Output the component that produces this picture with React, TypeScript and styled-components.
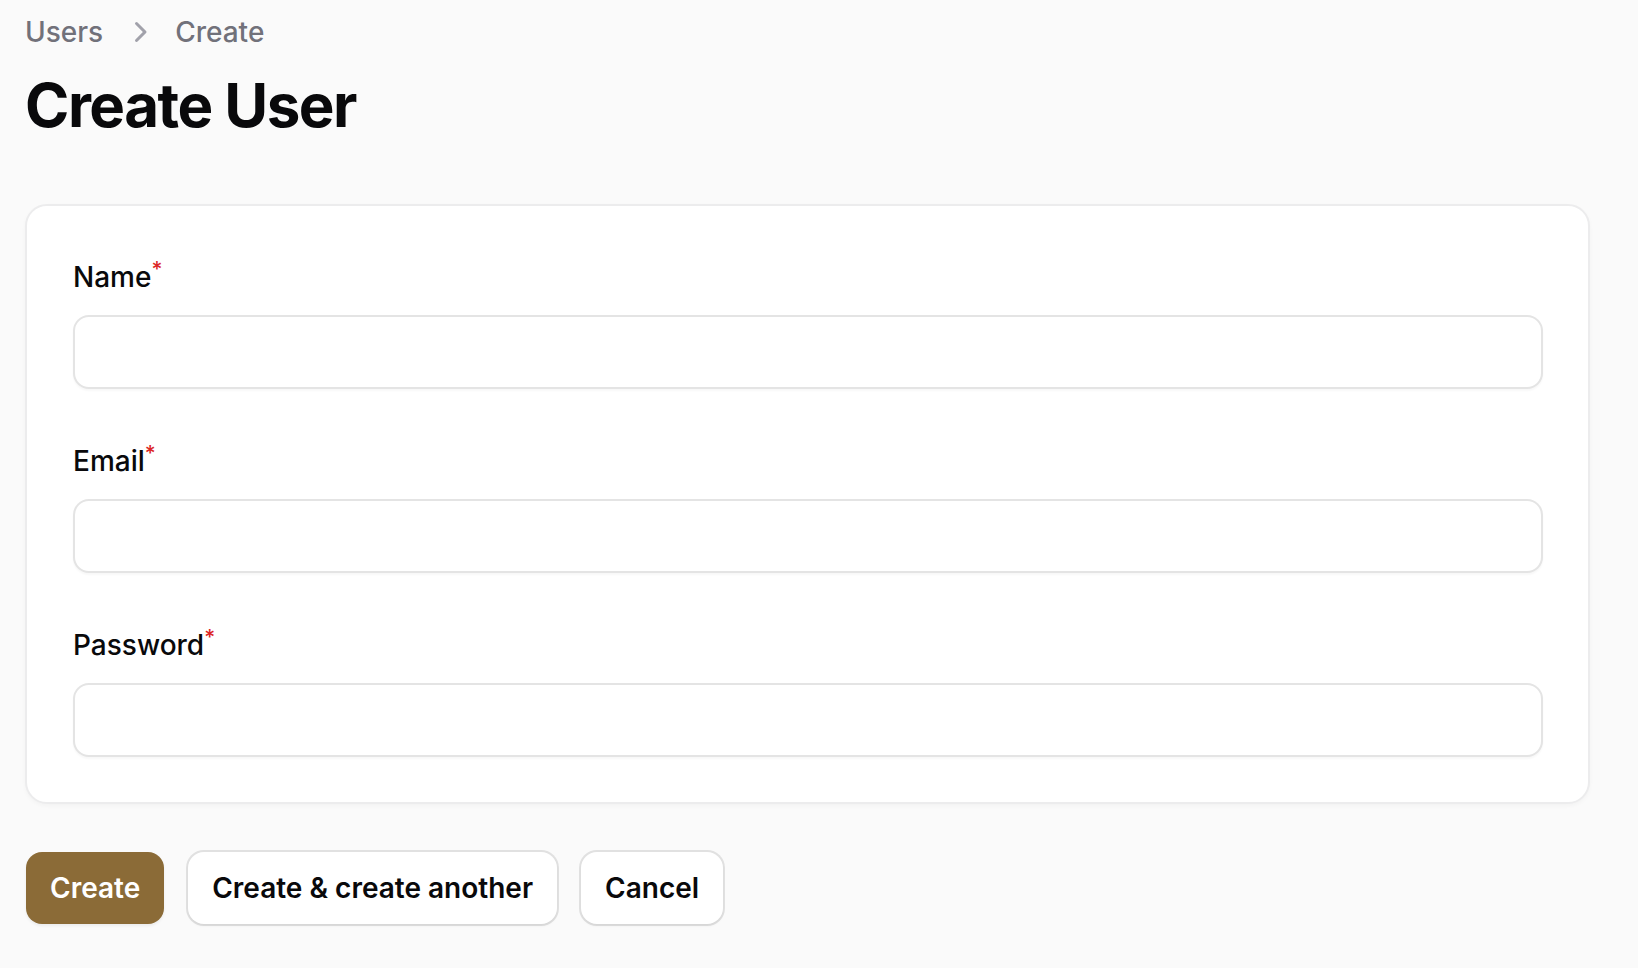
import React from "react";
import styled, { createGlobalStyle } from "styled-components";

const GlobalStyle = createGlobalStyle`
  *, *::before, *::after { box-sizing: border-box; }
  html, body { margin: 0; padding: 0; }
  body {
    background: #fafafa;
    font-family: Inter, "Noto Sans", "Liberation Sans", sans-serif;
    color: #09090b;
    -webkit-font-smoothing: antialiased;
  }
`;

const Page = styled.main`
  display: flex;
  flex-direction: column;
  padding: 12px 48px 40px 25px;
`;

const Header = styled.header`
  display: flex;
  flex-direction: column;
  gap: 17px;
`;

const Breadcrumbs = styled.nav`
  display: flex;
  align-items: center;
  gap: 16px;
  height: 40px;
`;

const Crumb = styled.a`
  font-size: 28px;
  line-height: 40px;
  font-weight: 500;
  color: #71717a;
  text-decoration: none;
`;

const Chevron = styled.svg`
  width: 40px;
  height: 40px;
  color: #a1a1aa;
  flex: none;
`;

const Title = styled.h1`
  margin: 0;
  font-size: 60px;
  line-height: 72px;
  font-weight: 700;
  letter-spacing: -0.025em;
  color: #09090b;
`;

const Card = styled.section`
  margin-top: 63px;
  background: #ffffff;
  border: 2px solid #ececed;
  border-radius: 22px;
  box-shadow: 0 2px 4px rgba(0, 0, 0, 0.03);
  padding: 46px 45px 45px 46px;
  display: flex;
  flex-direction: column;
  gap: 47px;
`;

const Field = styled.div`
  display: flex;
  flex-direction: column;
  gap: 18px;
`;

const Label = styled.label`
  display: block;
  padding-top: 5px;
  font-size: 28px;
  line-height: 40px;
  font-weight: 450;
  color: #09090b;
`;

const Required = styled.sup`
  color: #dc2626;
  font-weight: 500;
  font-size: 21px;
  line-height: 0;
`;

const Input = styled.input`
  display: block;
  width: 100%;
  height: 74px;
  border: 2px solid rgba(9, 9, 11, 0.11);
  border-radius: 16px;
  background: #ffffff;
  box-shadow: 0 2px 2px rgba(0, 0, 0, 0.03);
  padding: 0 24px;
  font: inherit;
  font-size: 28px;
  color: #09090b;
  outline: none;
`;

const Actions = styled.div`
  margin-top: 48px;
  display: flex;
  gap: 24px;
  padding-left: 1px;
`;

const Button = styled.button<{ $primary?: boolean }>`
  height: 72px;
  padding: 0 24px;
  border-radius: 16px;
  font-family: inherit;
  font-size: 28px;
  font-weight: 600;
  cursor: pointer;
  border: none;
  background: ${(p) => (p.$primary ? "#8b6b37" : "#ffffff")};
  color: ${(p) => (p.$primary ? "#ffffff" : "#09090b")};
  box-shadow: ${(p) =>
    p.$primary
      ? "0 2px 3px rgba(0, 0, 0, 0.06)"
      : "0 0 0 2px rgba(9, 9, 11, 0.1), 0 2px 3px rgba(0, 0, 0, 0.05)"};
`;

const fields = [
  { id: "name", label: "Name", type: "text" },
  { id: "email", label: "Email", type: "email" },
  { id: "password", label: "Password", type: "password" },
];

export default function App() {
  return (
    <>
      <GlobalStyle />
      <Page>
        <Header>
          <Breadcrumbs aria-label="Breadcrumb">
            <Crumb href="#">Users</Crumb>
            <Chevron viewBox="0 0 20 20" fill="currentColor" aria-hidden="true">
              <path
                fillRule="evenodd"
                d="M8.22 5.22a.75.75 0 0 1 1.06 0l4.25 4.25a.75.75 0 0 1 0 1.06l-4.25 4.25a.75.75 0 0 1-1.06-1.06L11.94 10 8.22 6.28a.75.75 0 0 1 0-1.06Z"
                clipRule="evenodd"
              />
            </Chevron>
            <Crumb href="#">Create</Crumb>
          </Breadcrumbs>
          <Title>Create User</Title>
        </Header>

        <Card>
          {fields.map((f) => (
            <Field key={f.id}>
              <Label htmlFor={f.id}>
                {f.label}
                <Required>*</Required>
              </Label>
              <Input id={f.id} type={f.type} />
            </Field>
          ))}
        </Card>

        <Actions>
          <Button $primary>Create</Button>
          <Button>Create &amp; create another</Button>
          <Button>Cancel</Button>
        </Actions>
      </Page>
    </>
  );
}
